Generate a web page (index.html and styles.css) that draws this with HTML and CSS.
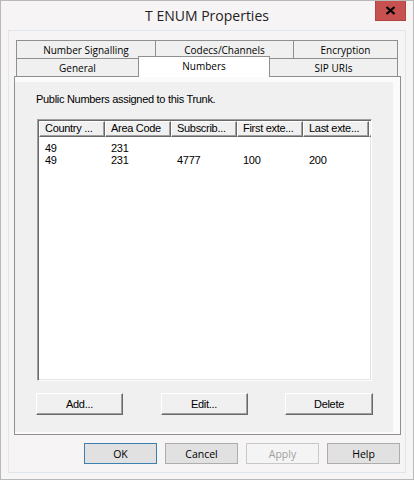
FILE: index.html
```html
<!DOCTYPE html>
<html>
<head>
<meta charset="utf-8">
<title>T ENUM Properties</title>
<link rel="stylesheet" href="styles.css">
</head>
<body>
<div class="window">
  <div class="titlebar">
    <span></span>
    <div class="title">T ENUM Properties</div>
    <button class="close" aria-label="Close">
      <svg width="11" height="9" viewBox="0 0 11 9"><path d="M1.5 1 L9.5 8 M9.5 1 L1.5 8" stroke="#000" stroke-width="2.3" fill="none"/></svg>
    </button>
  </div>

  <div class="client">
    <div class="tabs">
      <div class="tabrow back">
        <div class="tab">Number Signalling</div>
        <div class="tab">Codecs/Channels</div>
        <div class="tab last">Encryption</div>
      </div>
      <div class="tabrow front">
        <div class="tab">General</div>
        <div class="tab active">Numbers</div>
        <div class="tab last after-active">SIP URIs</div>
      </div>
    </div>

    <div class="panel">
      <div class="page">
        <p class="caption">Public Numbers assigned to this Trunk.</p>
        <div class="listview">
          <div class="lv-header">
            <div class="hcell">Country ...</div>
            <div class="hcell">Area Code</div>
            <div class="hcell">Subscrib...</div>
            <div class="hcell">First exte...</div>
            <div class="hcell">Last exte...</div>
            <div class="hcell filler"></div>
          </div>
          <div class="lv-body">
            <div class="lv-row"><span>49</span><span>231</span><span></span><span></span><span></span></div>
            <div class="lv-row"><span>49</span><span>231</span><span>4777</span><span>100</span><span>200</span></div>
          </div>
        </div>
        <div class="page-buttons">
          <button class="classic">Add...</button>
          <button class="classic">Edit...</button>
          <button class="classic wide">Delete</button>
        </div>
      </div>
    </div>

    <div class="dialog-buttons">
      <button class="btn default">OK</button>
      <button class="btn">Cancel</button>
      <button class="btn" disabled>Apply</button>
      <button class="btn">Help</button>
    </div>
  </div>
</div>
</body>
</html>
```

FILE: styles.css
```css
* { box-sizing: border-box; }

html, body {
  margin: 0;
  padding: 0;
  background: #ffffff;
}

.window {
  width: 414px;
  height: 480px;
  border: 1px solid #b9b9b9;
  background: #f7f4f6;
  display: flex;
  flex-direction: column;
}

/* caption bar */
.titlebar {
  height: 29px;
  display: grid;
  grid-template-columns: 1fr auto 1fr;
  align-items: center;
}

.title {
  font-family: "Open Sans", "Noto Sans", sans-serif;
  font-size: 14px;
  color: #222;
  line-height: 20px;
  margin-top: 1px;
}

.close {
  justify-self: end;
  align-self: start;
  width: 31px;
  height: 20px;
  margin: 0 7px 0 0;
  padding: 0;
  border: 1px solid #b0443f;
  border-top: none;
  background: #c75050;
  display: flex;
  align-items: center;
  justify-content: center;
}

.close svg { display: block; }

/* dialog client area */
.client {
  margin: 0 7px;
  height: 443px;
  border: 1px solid #e0e6ee;
  background: #f7f4f6;
  padding: 9px 0 8px 0;
  display: flex;
  flex-direction: column;
}

/* tab strip */
.tabs {
  margin-left: 7px;
  width: 382px;
  font-family: "Open Sans", "Noto Sans", sans-serif;
  font-size: 10px;
  color: #000;
}

.tabrow {
  display: grid;
  height: 18px;
}

.tabrow.back { grid-template-columns: 139px 138px 105px; }
.tabrow.front { grid-template-columns: 122px 132px 128px; }

.tab {
  background: #f0f0f0;
  border-top: 1px solid #8f8f8f;
  border-left: 1px solid #8f8f8f;
  text-align: center;
  line-height: 17px;
  padding-top: 1px;
  white-space: nowrap;
}

.tab.last { border-right: 1px solid #8f8f8f; }
.tab.after-active { border-left: none; }

.tab.active {
  position: relative;
  z-index: 1;
  background: #ffffff;
  border-right: 1px solid #8f8f8f;
  margin-top: -2px;
  height: 21px;
  line-height: 17px;
}

/* tab page */
.panel {
  margin-left: 5px;
  width: 387px;
  height: 359px;
  border: 1px solid #8f8f8f;
  background: #fbfbfb;
  padding: 5px 7px 2px 0;
}

.page {
  height: 100%;
  background: #f0f0f0;
  padding: 11px 0 0 21px;
  font-family: "Liberation Sans", Arial, sans-serif;
  font-size: 11px;
  letter-spacing: -0.3px;
  color: #000;
}

.caption {
  margin: 0 0 14px 0;
  line-height: 12px;
}

/* list view */
.listview {
  margin-left: 1px;
  width: 335px;
  height: 262px;
  background: #ffffff;
  border-top: 1px solid #a0a0a0;
  border-left: 1px solid #a0a0a0;
  border-right: 1px solid #ffffff;
  border-bottom: 1px solid #ffffff;
  box-shadow: inset 1px 1px 0 #696969, inset -1px -1px 0 #e3e3e3;
  padding: 1px;
  overflow: hidden;
}

.lv-header {
  display: grid;
  grid-template-columns: 66px 66px 66px 66px 66px 1fr;
  height: 16px;
}

.hcell {
  background: #f0f0f0;
  border-top: 1px solid #ffffff;
  border-left: 1px solid #ffffff;
  border-right: 1px solid #696969;
  border-bottom: 1px solid #696969;
  box-shadow: inset -1px -1px 0 #a0a0a0;
  padding-left: 5px;
  line-height: 13px;
  white-space: nowrap;
  overflow: hidden;
}

.lv-body {
  padding-top: 5px;
}

.lv-row {
  display: grid;
  grid-template-columns: 66px 66px 66px 66px 66px;
  line-height: 12px;
}

.lv-row span {
  padding-left: 6px;
}

/* classic push buttons inside the page */
.page-buttons {
  margin-top: 12px;
  width: 337px;
  display: flex;
  justify-content: space-between;
}

.classic {
  width: 87px;
  height: 22px;
  padding: 0 0 1px 0;
  background: #f0f0f0;
  font-family: "Liberation Sans", Arial, sans-serif;
  font-size: 11px;
  letter-spacing: -0.3px;
  color: #000;
  border-top: 1px solid #ffffff;
  border-left: 1px solid #ffffff;
  border-right: 1px solid #696969;
  border-bottom: 1px solid #696969;
  box-shadow: inset -1px -1px 0 #a0a0a0;
}

.classic.wide { width: 88px; }

/* OK / Cancel / Apply / Help */
.dialog-buttons {
  margin-top: 8px;
  padding-right: 5px;
  display: flex;
  justify-content: flex-end;
  gap: 8px;
}

.btn {
  width: 73px;
  height: 21px;
  padding: 0;
  background: #e1e1e1;
  border: 1px solid #adadad;
  font-family: "Open Sans", "Noto Sans", sans-serif;
  font-size: 10.5px;
  color: #000;
}

.btn.default { border-color: #3c7fb1; }

.btn:disabled {
  background: #f4f4f4;
  border-color: #c8c8c8;
  color: #a0a0a0;
}
```
